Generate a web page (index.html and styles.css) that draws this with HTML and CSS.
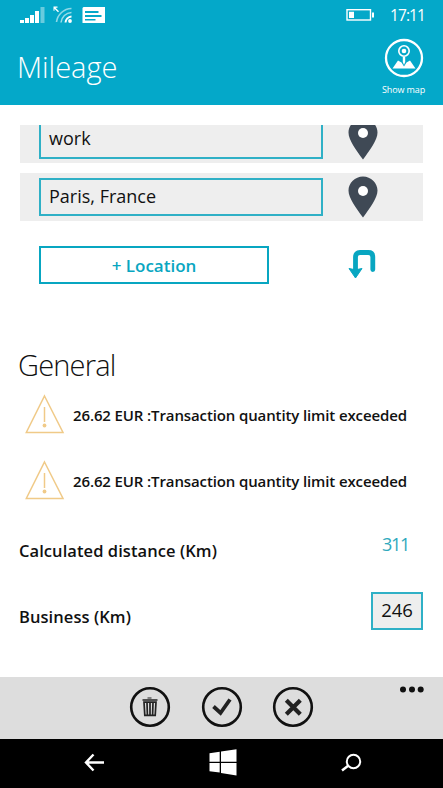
FILE: index.html
```html
<!DOCTYPE html>
<html lang="en">
<head>
    <meta charset="UTF-8">
    <meta name="viewport" content="width=device-width, initial-scale=1.0">
    <title>Mileage</title>
    <link rel="stylesheet" href="styles.css">
</head>
<body>

    <header class="header">
        <div class="status-bar">
            <svg class="status-icons" width="90" height="20" viewBox="0 0 90 20" fill="#fff">
                <path d="M0 15h4v3H0zM5 13h4v5H5zM10 10h4v8h-4zM15 6h4v12h-4z"/>
                <path opacity=".4" d="M20.500 2h4v16h-4z"/>
                <path d="M33.500 1.500h4v1.200h-2l3.500 3.500-1 1-3.500-3.500v2h-1z"/>
                <g fill="none" stroke="#fff" stroke-width="1.600">
                    <path opacity=".55" d="M36.500 17A15.500 15.500 0 0 1 51.500 3.500"/>
                    <path opacity=".6" d="M41 17.500A11 11 0 0 1 51.500 7.500"/>
                    <path stroke-width="2" d="M45.500 17.500A6.500 6.500 0 0 1 51.500 11.500"/>
                </g>
                <circle cx="50" cy="16" r="1.900"/>
                <path fill-rule="evenodd" d="M63.500 2H85v16H62.500V3zM65 6v2h13.500V6zM65 10v2h16.500v-2zM65 14v1.500h10.500V14z"/>
            </svg>
            <svg class="battery" width="29" height="14" viewBox="0 0 29 14">
                <rect x="1" y="1.700" width="23.500" height="10.300" fill="none" stroke="#fff" stroke-width="1.400"/>
                <path fill="#fff" d="M3 3.800h5v6.200H3zM26 4.500h2v5h-2z"/>
            </svg>
            <span class="clock">17:11</span>
        </div>
        <div class="title-bar">
            <h1>Mileage</h1>
            <div class="show-map">
                <svg width="40" height="40" viewBox="0 0 40 40">
                    <circle cx="20" cy="20" r="18" fill="none" stroke="#fff" stroke-width="2.300"/>
                    <path fill="#fff" d="M8.500 30.500l5.500-8 3.500 2 2.500 4 2.500-4 3.500-2 5.500 8zM18.800 19h2.400v5L20 27l-1.200-3z"/>
                    <circle cx="20" cy="13" r="5.200" fill="none" stroke="#fff" stroke-width="1.600"/>
                    <circle cx="20" cy="13" r="2.300" fill="#fff"/>
                </svg>
                <span>Show map</span>
            </div>
        </div>
    </header>

    <main class="content">
        <div class="location-list">
            <div class="location">
                <div class="field">work</div>
                <svg class="pin" width="30" height="42" viewBox="0 0 30 42">
                    <path fill="#3f4955" d="M15 .5C7 .5.500 7 .5 14.500.5 22 8 32 15 41.500 22 32 29.500 22 29.500 14.500 29.500 7 23 .5 15 .5z"/>
                    <circle cx="15" cy="15" r="5" fill="#fff"/>
                </svg>
            </div>
            <div class="location">
                <div class="field">Paris, France</div>
                <svg class="pin" width="30" height="42" viewBox="0 0 30 42">
                    <path fill="#3f4955" d="M15 .5C7 .5.500 7 .5 14.500.5 22 8 32 15 41.500 22 32 29.500 22 29.500 14.500 29.500 7 23 .5 15 .5z"/>
                    <circle cx="15" cy="15" r="5" fill="#fff"/>
                </svg>
            </div>
        </div>

        <div class="location-actions">
            <button class="add-location">+ Location</button>
            <svg width="30" height="32" viewBox="0 0 30 32">
                <path fill="none" stroke="#08a6c1" stroke-width="4.800" stroke-linecap="round" d="M7.500 21V8Q7.500 3.500 12 3.500h8.300Q24.800 3.500 24.800 8V20.500"/>
                <path fill="#08a6c1" stroke="#08a6c1" stroke-linejoin="round" d="M1 19.500l5 1h3l5-1L7.500 29z"/>
            </svg>
        </div>

        <h2>General</h2>
        <div class="warning">
            <svg width="40" height="41" viewBox="0 0 40 41" fill="none" stroke="#f0ca88" stroke-width="1.500">
                <path d="M19.500 2L38 38.500H1.300z"/>
                <path d="M19.500 13v15"/>
                <circle cx="19.500" cy="31.500" r="1.900" fill="#f0ca88" stroke="none"/>
            </svg>
            <span>26.62 EUR :Transaction quantity limit exceeded</span>
        </div>
        <div class="warning">
            <svg width="40" height="41" viewBox="0 0 40 41" fill="none" stroke="#f0ca88" stroke-width="1.500">
                <path d="M19.500 2L38 38.500H1.300z"/>
                <path d="M19.500 13v15"/>
                <circle cx="19.500" cy="31.500" r="1.900" fill="#f0ca88" stroke="none"/>
            </svg>
            <span>26.62 EUR :Transaction quantity limit exceeded</span>
        </div>

        <div class="rows">
            <div class="row">
                <label>Calculated distance (Km)</label>
                <span class="distance">311</span>
            </div>
            <div class="row">
                <label>Business (Km)</label>
                <div class="amount">246</div>
            </div>
        </div>
    </main>

    <div class="app-bar">
        <div class="app-buttons">
            <svg width="42" height="42" viewBox="0 0 42 42">
                <circle cx="21" cy="21" r="18.800" fill="none" stroke="#111" stroke-width="2.600"/>
                <path fill="#222" d="M18.500 11.500h4v1h-4zM13.500 13.200h15v1.600h-15z"/>
                <path fill="none" stroke="#222" stroke-width="1.700" d="M15 16.200h12L26.200 29.300H15.800zM18 16.500l.4 12.500M21 16.500V29M24 16.500l-.4 12.500"/>
            </svg>
            <svg width="42" height="42" viewBox="0 0 42 42" fill="none" stroke="#111">
                <circle cx="21" cy="21" r="18.800" stroke-width="2.600"/>
                <path stroke="#222" stroke-width="3.800" d="M12.500 20.500l7 6.500 9.500-13.500"/>
            </svg>
            <svg width="42" height="42" viewBox="0 0 42 42" fill="none" stroke="#111">
                <circle cx="21" cy="21" r="18.800" stroke-width="2.600"/>
                <path stroke="#222" stroke-width="4.200" d="M14.300 14.300l14 14M28.300 14.300l-14 14"/>
            </svg>
        </div>
        <svg class="more" width="26" height="8" viewBox="0 0 26 8" fill="#111">
            <circle cx="4" cy="3.500" r="3"/>
            <circle cx="13" cy="3.500" r="3"/>
            <circle cx="21.700" cy="3.500" r="3"/>
        </svg>
    </div>

    <nav class="nav-bar">
        <svg width="22" height="20" viewBox="0 0 22 20" fill="none" stroke="#fff" stroke-width="2.400">
            <path d="M21 9.500H3M10.500 1.500L3 9.500l7.500 8"/>
        </svg>
        <svg width="28" height="28" viewBox="0 0 28 28" fill="#fff">
            <path d="M.5 4.300l10.200-1.500v9.900H.5zM12 2.600L27.500.3v12.400H12zM.5 14.100h10.200v9.500L.5 22.200zM12 14.100h15.500v12.500L12 24z"/>
        </svg>
        <svg width="22" height="20" viewBox="0 0 22 20" fill="none" stroke="#fff" stroke-width="2">
            <circle cx="13.500" cy="8.500" r="6.700"/>
            <path stroke-width="2.500" d="M8.500 12.500l-6.500 5"/>
        </svg>
    </nav>

</body>
</html>
```
FILE: styles.css
```css
* {
    box-sizing: border-box;
    margin: 0;
    padding: 0;
}
body {
    font-family: "Open Sans", "Noto Sans", sans-serif;
    width: 443px;
    height: 788px;
    display: flex;
    flex-direction: column;
    background-color: #fff;
    color: #111;
    overflow: hidden;
}
svg {
    display: block;
    flex-shrink: 0;
}
.header {
    height: 105px;
    background-color: #04a8c9;
    color: #fff;
}
.status-bar {
    display: flex;
    align-items: center;
    height: 30px;
    padding: 0 20px;
}
.status-icons {
    margin-top: -1px;
}
.battery {
    margin-left: auto;
    margin-right: 15px;
}
.clock {
    width: 33px;
    font-size: 15.5px;
    letter-spacing: -0.9px;
    white-space: nowrap;
}
.title-bar {
    display: flex;
    justify-content: space-between;
    padding: 0 17px;
}
.title-bar h1 {
    font-size: 29px;
    font-weight: 300;
    line-height: 40px;
    padding-top: 17px;
}
.show-map {
    display: flex;
    flex-direction: column;
    align-items: center;
    width: 45px;
    padding-top: 8px;
}
.show-map span {
    font-size: 9px;
    line-height: 14px;
    letter-spacing: -0.1px;
    padding-top: 5px;
    white-space: nowrap;
}
.content {
    height: 572px;
    padding: 20px 20px 0 19px;
}
/* the list is scrolled, the first row is cut at the top */
.location-list {
    display: flex;
    flex-direction: column;
    justify-content: flex-end;
    gap: 10px;
    height: 96px;
    margin-left: 1px;
    overflow: hidden;
}
.location {
    display: flex;
    align-items: center;
    flex-shrink: 0;
    height: 48px;
    padding-left: 19px;
    background-color: #eee;
}
.field {
    width: 284px;
    height: 38px;
    padding-left: 8px;
    border: 2px solid #2fb0c6;
    font-size: 18px;
    line-height: 33px;
}
.location:first-child .field {
    height: 40px;
    line-height: 34px;
}
.pin {
    margin-left: 25px;
}
.location-actions {
    display: flex;
    align-items: center;
    padding: 25px 0 0 20px;
}
.add-location {
    width: 230px;
    height: 38px;
    margin-right: 79px;
    border: 2px solid #08a6c1;
    background-color: #fff;
    color: #08a6c1;
    font-family: inherit;
    font-size: 17px;
    font-weight: 600;
}
h2 {
    margin-top: 61px;
    margin-left: -1px;
    font-size: 29px;
    font-weight: 300;
    line-height: 40px;
    letter-spacing: -0.8px;
}
.warning {
    display: flex;
    height: 66px;
    padding: 9px 0 0 6px;
}
.warning span {
    margin-left: 8px;
    font-size: 15px;
    font-weight: 600;
    line-height: 42px;
    letter-spacing: -0.12px;
    white-space: nowrap;
}
.rows {
    margin-top: -5px;
}
.row {
    display: flex;
    justify-content: space-between;
    align-items: center;
    height: 66px;
}
.row label {
    font-size: 16.5px;
    font-weight: 600;
    letter-spacing: 0.07px;
    padding-top: 10px;
}
.distance {
    margin-right: 14px;
    padding-bottom: 2px;
    font-size: 18px;
    letter-spacing: -1.3px;
    color: #2fa9bd;
}
.amount {
    width: 52px;
    height: 38px;
    border: 2px solid #2fb0c6;
    background-color: #eee;
    font-size: 18.5px;
    line-height: 32px;
    text-align: center;
}
.app-bar {
    display: flex;
    height: 62px;
    padding: 9px 18px 0 129px;
    background-color: #ddd;
}
.app-buttons {
    display: flex;
    gap: 29.5px;
}
.more {
    margin-left: auto;
}
.nav-bar {
    display: flex;
    justify-content: space-between;
    align-items: center;
    height: 49px;
    padding: 0 81px 2px 83px;
    background-color: #000;
}
```
